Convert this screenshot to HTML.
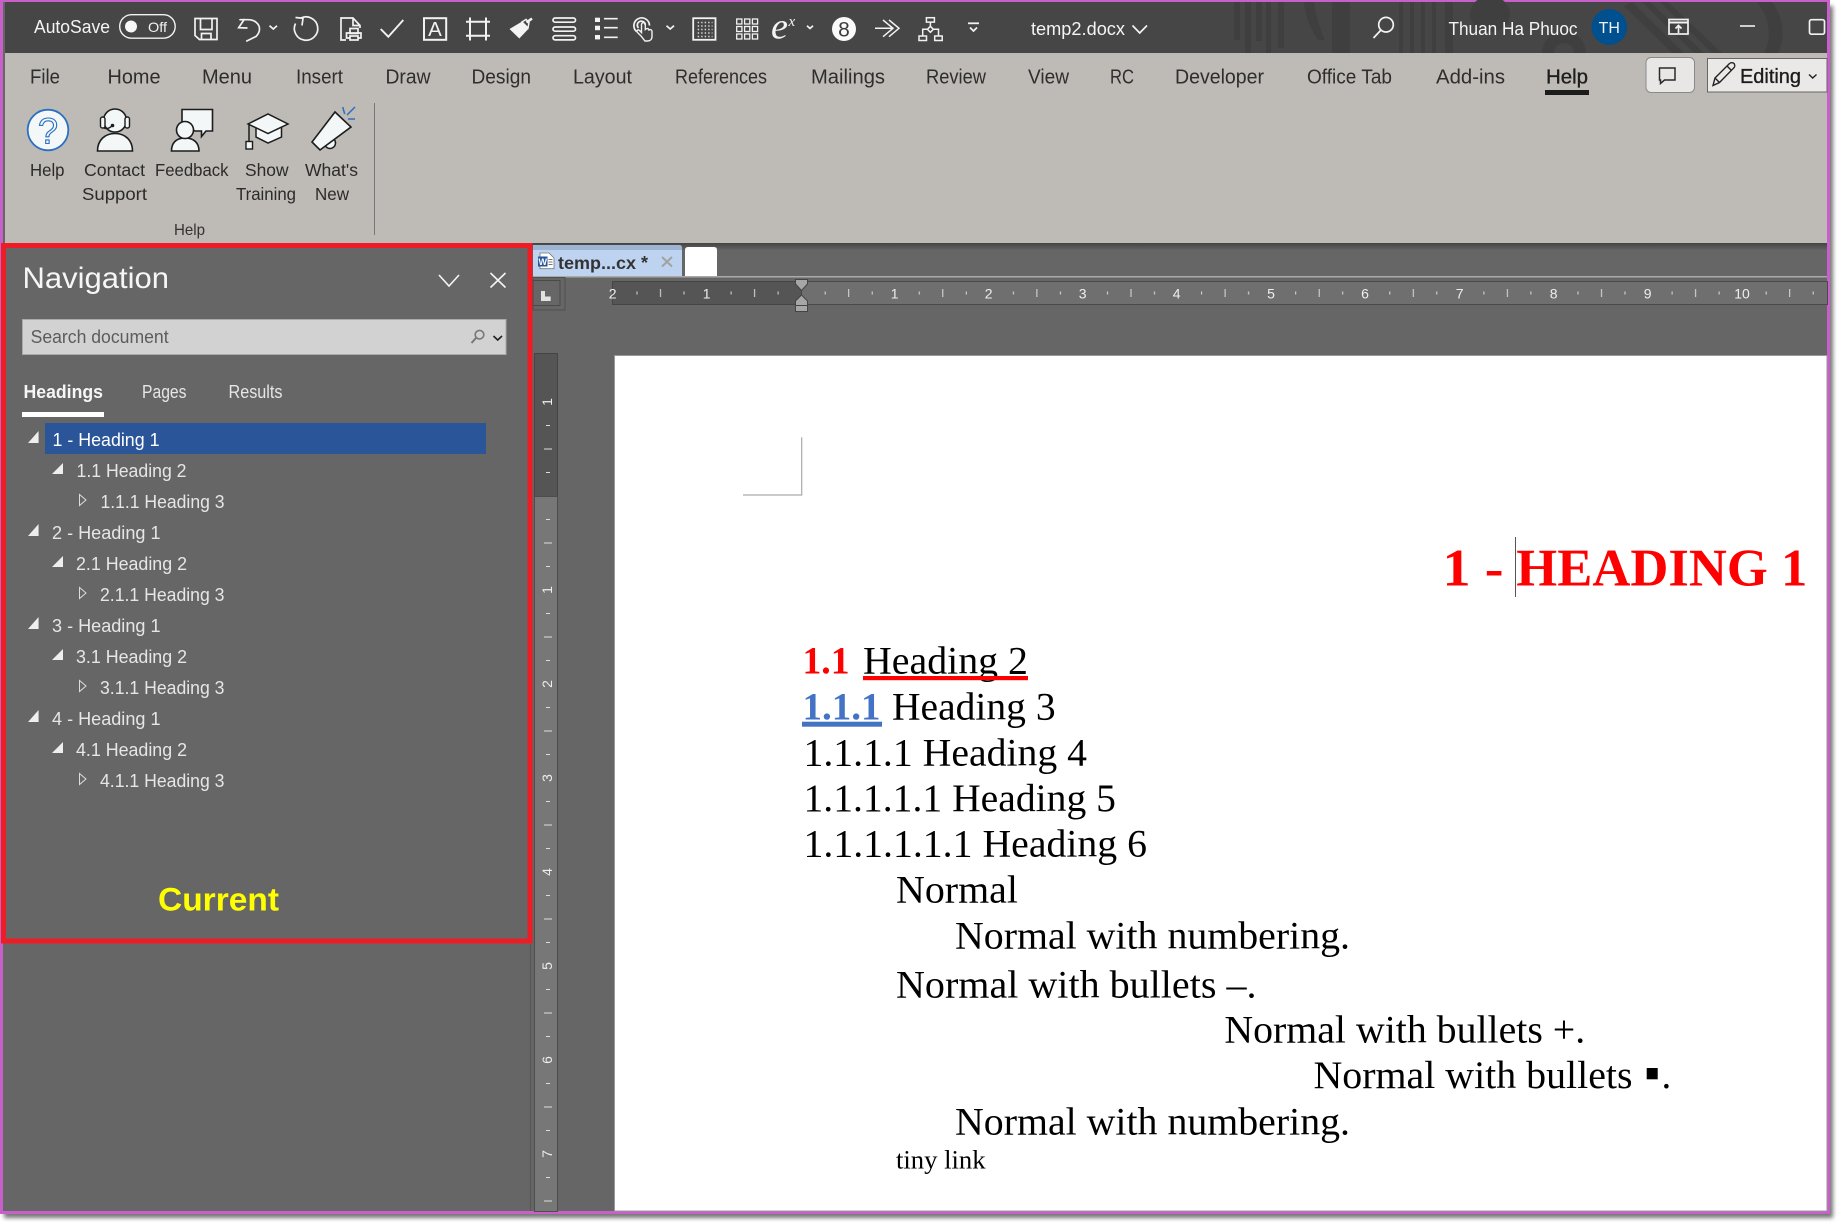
<!DOCTYPE html>
<html><head><meta charset="utf-8"><title>temp2.docx</title>
<style>
html,body{margin:0;padding:0;background:#fff;width:1838px;height:1222px;overflow:hidden}
svg{display:block}
text{font-family:"Liberation Sans",sans-serif;white-space:pre}
.tab{font-size:20px;fill:#2e2e2e}
.lab{font-size:17.5px;fill:#2b2b2b}
.nv{font-size:18px;fill:#e6e6e6}
.s{font-family:"Liberation Serif",serif;font-size:39px;fill:#000}
.rn{font-size:14px;fill:#eee;text-anchor:middle}
.w{fill:none;stroke:#f2f2f2;stroke-width:1.7}
.k{fill:#f3f7f7;stroke:#1c1c1c;stroke-width:1.7}
</style></head><body>
<svg width="1838" height="1222" viewBox="0 0 1838 1222" xmlns="http://www.w3.org/2000/svg">
<defs>
<filter id="b" x="-5%" y="-5%" width="110%" height="110%"><feGaussianBlur stdDeviation="2"/></filter>
<linearGradient id="sh" x1="0" y1="0" x2="0" y2="1"><stop offset="0" stop-color="#444"/><stop offset="1" stop-color="#666"/></linearGradient>
<pattern id="ht" patternUnits="userSpaceOnUse" x="801.7" y="281" width="94.1" height="23">
<rect x="23" y="10.5" width="1" height="3" fill="#ddd"/><rect x="46.5" y="8" width="1" height="8" fill="#ddd"/><rect x="70" y="10.5" width="1" height="3" fill="#ddd"/>
</pattern>
<pattern id="vt" patternUnits="userSpaceOnUse" x="534" y="496" width="24" height="94">
<rect x="12" y="23" width="4" height="1" fill="#ddd"/><rect x="10" y="46.5" width="8" height="1" fill="#ddd"/><rect x="12" y="70" width="4" height="1" fill="#ddd"/>
</pattern>
<g id="tris">
<path d="M28 443H38.6V431Z" fill="#eee"/>
<path d="M52 474H63V463Z" fill="#eee"/>
<path d="M79.5 494.5L86 500L79.5 505.5Z" fill="none" stroke="#ddd" stroke-width="1"/>
</g>
</defs>

<!-- outer shadow + frame -->
<rect x="4" y="6" width="1829" height="1212" fill="#777" filter="url(#b)"/>
<rect x="0" y="0" width="1830" height="1214" fill="#c95fc9"/>
<rect x="3" y="2" width="1824" height="1209" fill="#666"/>

<!-- title bar -->
<rect x="5" y="2" width="1822" height="51" fill="#464646"/>
<g fill="#3f3f3f">
<rect x="1234" y="2" width="6" height="38"/><rect x="1245" y="2" width="6" height="51"/><rect x="1256" y="2" width="6" height="39"/><rect x="1266" y="2" width="5" height="51"/><rect x="1278" y="2" width="6" height="46"/>
<path d="M1304 2H1314C1316 18 1320 28 1325 40L1318 40C1310 28 1305 16 1304 2Z"/>
<rect x="1332" y="2" width="18" height="51"/>
<rect x="1399" y="2" width="4" height="51"/><rect x="1410" y="2" width="4" height="51"/><rect x="1421" y="2" width="4" height="51"/><rect x="1432" y="2" width="4" height="51"/><rect x="1445" y="2" width="8" height="51"/>
<ellipse cx="1490" cy="14" rx="20" ry="18"/>
<path d="M1542 53A22 22 0 0 1 1586 53H1574A10 10 0 0 0 1554 53Z"/>
<path d="M1632 2L1684 53H1672L1624 6Z"/><path d="M1650 2L1704 53H1694L1642 2Z"/><path d="M1668 2L1722 53H1712L1660 2Z"/>
<path d="M1757 2H1772C1785 20 1785 38 1778 53H1764C1772 38 1770 18 1757 2Z"/>
</g>
<text x="34" y="33" font-size="18.5" fill="#f4f4f4" textLength="76" lengthAdjust="spacingAndGlyphs">AutoSave</text>
<rect x="119.7" y="14.7" width="55.5" height="23.5" rx="11.7" fill="none" stroke="#f2f2f2" stroke-width="1.4"/>
<circle cx="131" cy="26.5" r="6" fill="#f8f8f8"/>
<text x="148" y="32" font-size="14" fill="#f2f2f2" textLength="19" lengthAdjust="spacingAndGlyphs">Off</text>

<g class="w">
<!-- save -->
<path d="M195 18.5H217V39.5H199.5L195 35.5Z"/><path d="M200.5 18.5V29.5H212V18.5"/><path d="M201.5 39.5V33.5H211V39.5"/>
<!-- undo -->
<path d="M244.5 19L238.7 27.7L247.5 28"/><path d="M240 19.7H248C255 19.7 259.5 24 259.5 29C259.5 32 258 34.5 256 36.5L246.8 41" stroke-linecap="round"/>
<path d="M269.5 25.7L273.3 29L277 25.7"/>
<!-- redo -->
<path d="M301 18A11.7 11.7 0 1 1 295.5 23.5"/><path d="M295.5 17.5L303 18.3L302 25.5"/>
<!-- print doc -->
<path d="M346 40H341V18H353L360 25.5V28"/><path d="M353 18V25.5H360"/><rect x="350" y="28.5" width="8" height="5"/><path d="M350 38H346.5V33H361V38H357.5"/><rect x="350" y="36" width="8" height="4"/>
<!-- check -->
<path d="M380.7 29L388.3 36.7L403.3 20" stroke-width="1.9"/>
<!-- A box -->
<rect x="424" y="18.2" width="22.2" height="21.6" stroke-width="2"/>
<!-- hash -->
<path d="M470 17.5V40.5M486 17.5V40.5M466 21.7H490M466 35.7H490" stroke-width="2"/>
<!-- stack -->
<rect x="553" y="18" width="22.5" height="4.2" rx="2.1"/><rect x="553" y="27" width="22.5" height="4.2" rx="2.1"/><rect x="553" y="35.7" width="22.5" height="4.2" rx="2.1"/>
<!-- bullets lines -->
<path d="M604 18.7H617.7M604 27.7H617.7M604 37.3H617.7"/>
<!-- touch -->
<path d="M636.5 31.5A7.8 7.8 0 1 1 649.5 25.5"/><path d="M638.5 28A4 4 0 1 1 645.3 25"/><path d="M641 36L637.5 32.5C636 31 638 29 639.5 30.5L641.5 32.5V24.5C641.5 22 645.3 22 645.3 24.5V29.5C647 28 648.7 28.5 649 30C650.5 29 652 30 652 31.5V36.5C652 39.5 650 41 647.5 41H645Z" stroke-width="1.4"/>
<path d="M666.5 25.7L670.2 29L674 25.7"/>
<!-- grid box -->
<rect x="693.2" y="18.2" width="22.3" height="21.6" stroke-width="1.8"/>
<!-- 3x3 -->
<g stroke-width="1.3"><rect x="736.7" y="19" width="5.2" height="5"/><rect x="744.6" y="19" width="5.2" height="5"/><rect x="752.4" y="19" width="5.2" height="5"/><rect x="736.7" y="26.5" width="5.2" height="5"/><rect x="744.6" y="26.5" width="5.2" height="5"/><rect x="752.4" y="26.5" width="5.2" height="5"/><rect x="736.7" y="34" width="5.2" height="5"/><rect x="744.6" y="34" width="5.2" height="5"/><rect x="752.4" y="34" width="5.2" height="5"/></g>
<path d="M810 25.7L813 28.5L816 25.7" transform="translate(-3,0)"/>
<!-- double arrow -->
<path d="M875 28.3H893M883 20L893 28.3L883 36.7M889 20L899 28.3L889 36.7" stroke-width="1.5"/>
<!-- org -->
<g stroke-width="1.5"><rect x="926.4" y="17.7" width="8" height="4.4"/><rect x="919" y="36" width="7.5" height="4.5"/><rect x="934.7" y="36" width="7.5" height="4.5"/><path d="M930.4 22V26.3M930.4 26.3L933.4 29.3L930.4 32.3L927.4 29.3ZM927.4 29.3H922.7V36M933.4 29.3H938.5V36"/></g>
<!-- qat dropdown -->
<path d="M968 23.3H979" stroke-width="1.8"/><path d="M970 27.5L973.5 31L977 27.5"/>
<!-- title chevron -->
<path d="M1132.5 25.5L1139.7 33L1147 25.5"/>
<!-- search -->
<circle cx="1386" cy="24.7" r="7.3"/><path d="M1381 30L1373.5 38"/>
<!-- ribbon display -->
<rect x="1669" y="19.5" width="19" height="14.5"/><path d="M1669 22.5H1688" stroke-width="2"/><path d="M1678.5 33V26M1675.5 28.5L1678.5 25.5L1681.5 28.5"/>
<!-- min/max -->
<path d="M1740 26H1755" stroke-width="1.6"/>
<rect x="1809.5" y="19.7" width="15" height="14.5" rx="2"/>
</g>
<text x="435" y="36" font-size="20.5" fill="#f2f2f2" text-anchor="middle">A</text>
<!-- brush -->
<path d="M509.5 29L521.7 21.7L528.3 29L519.3 38.5Z" fill="#f4f4f4"/>
<path d="M522 22L526 19.5L529 22.5L528 28Z" fill="none" stroke="#f4f4f4" stroke-width="1.5"/>
<path d="M526.5 22.5L532 18.5" stroke="#f4f4f4" stroke-width="2.6"/>
<!-- bullets squares -->
<g fill="#f4f4f4"><rect x="595" y="17.7" width="5" height="4.3"/><rect x="595" y="25.7" width="5" height="4.5"/><rect x="595" y="35" width="5" height="4.4"/></g>
<!-- grid dots -->
<path d="M697.7 22.5H712.5M697.7 26H712.5M697.7 29.5H712.5M697.7 33H712.5M697.7 36.5H712.5" fill="none" stroke="#dcdcdc" stroke-width="1.4" stroke-dasharray="1.4 2.1"/>
<text x="771" y="38.5" font-size="37" fill="#f4f4f4" style="font-family:'Liberation Serif',serif;font-style:italic" textLength="17" lengthAdjust="spacingAndGlyphs">e</text>
<text x="788.5" y="26" font-size="15" fill="#f4f4f4" style="font-family:'Liberation Serif',serif;font-style:italic">x</text>
<circle cx="844" cy="29" r="12" fill="#fafafa"/>
<text x="844" y="36.5" font-size="21" fill="#3c3c3c" text-anchor="middle">8</text>
<text x="1031" y="35" font-size="18.5" fill="#f4f4f4" textLength="94" lengthAdjust="spacingAndGlyphs">temp2.docx</text>
<text x="1448.5" y="35" font-size="18.5" fill="#f4f4f4" textLength="129" lengthAdjust="spacingAndGlyphs">Thuan Ha Phuoc</text>
<ellipse cx="1609.3" cy="27" rx="17.8" ry="18" fill="#00508f"/>
<text x="1609.3" y="33" font-size="16" fill="#eaf1f7" text-anchor="middle">TH</text>

<!-- ribbon -->
<rect x="5" y="53" width="1822" height="190" fill="#bebab6"/>
<text class="tab" x="30" y="83.6" textLength="30" lengthAdjust="spacingAndGlyphs">File</text>
<text class="tab" x="107.5" y="83.6" textLength="53" lengthAdjust="spacingAndGlyphs">Home</text>
<text class="tab" x="202" y="83.6" textLength="50" lengthAdjust="spacingAndGlyphs">Menu</text>
<text class="tab" x="296" y="83.6" textLength="47" lengthAdjust="spacingAndGlyphs">Insert</text>
<text class="tab" x="385.5" y="83.6" textLength="45" lengthAdjust="spacingAndGlyphs">Draw</text>
<text class="tab" x="471.5" y="83.6" textLength="59.5" lengthAdjust="spacingAndGlyphs">Design</text>
<text class="tab" x="573" y="83.6" textLength="59" lengthAdjust="spacingAndGlyphs">Layout</text>
<text class="tab" x="675" y="83.6" textLength="92" lengthAdjust="spacingAndGlyphs">References</text>
<text class="tab" x="811" y="83.6" textLength="74" lengthAdjust="spacingAndGlyphs">Mailings</text>
<text class="tab" x="926" y="83.6" textLength="60" lengthAdjust="spacingAndGlyphs">Review</text>
<text class="tab" x="1028" y="83.6" textLength="41" lengthAdjust="spacingAndGlyphs">View</text>
<text class="tab" x="1110" y="83.6" textLength="24" lengthAdjust="spacingAndGlyphs">RC</text>
<text class="tab" x="1175" y="83.6" textLength="89" lengthAdjust="spacingAndGlyphs">Developer</text>
<text class="tab" x="1307" y="83.6" textLength="85" lengthAdjust="spacingAndGlyphs">Office Tab</text>
<text class="tab" x="1436" y="83.6" textLength="69" lengthAdjust="spacingAndGlyphs">Add-ins</text>
<text class="tab" x="1546" y="83.6" textLength="42" lengthAdjust="spacingAndGlyphs" style="fill:#1e1e1e;stroke:#1e1e1e;stroke-width:.35">Help</text>
<rect x="1545" y="90" width="44" height="5" fill="#1c1c1c"/>

<rect x="1646" y="57.5" width="48.5" height="35" rx="5" fill="#e9e7e5" stroke="#8a8a8a"/>
<path d="M1659.5 68H1675V80H1664.5L1660.5 83.5V80H1659.5Z" fill="none" stroke="#2a2a2a" stroke-width="1.5"/>
<rect x="1707.5" y="58.5" width="119.5" height="33.5" fill="#ebe9e7" stroke="#666"/>
<path d="M1713 85.5L1715 78L1729.5 63.5C1731 62.3 1733 62.5 1734 63.5C1735 64.7 1735 66.5 1734 67.7L1719.5 82.5ZM1715 78L1719.5 82.5M1727 66L1731.5 70.5" fill="none" stroke="#222" stroke-width="1.4"/>
<text x="1740" y="83" font-size="20" fill="#1c1c1c" textLength="61" lengthAdjust="spacingAndGlyphs" style="stroke:#1c1c1c;stroke-width:.35">Editing</text>
<path d="M1809 74.5L1812.7 78L1816.5 74.5" fill="none" stroke="#222" stroke-width="1.4"/>

<!-- ribbon icons -->
<circle cx="48" cy="130" r="20.3" fill="#f3f7f7" stroke="#2a6fc0" stroke-width="1.8"/>
<text x="48" y="143.5" font-size="36" fill="#f3f7f7" stroke="#2a6fc0" stroke-width="1.1" text-anchor="middle">?</text>
<!-- contact -->
<path class="k" d="M97.5 151C97.5 140 105 133.5 115 133.5C125 133.5 132.5 140 132.5 151Z" style="stroke-width:1.6"/>
<circle class="k" cx="115" cy="120.5" r="11.5" style="stroke-width:1.6"/>
<rect class="k" x="100.5" y="117" width="4.5" height="11" rx="2" style="stroke-width:1.4"/><rect class="k" x="125" y="117" width="4.5" height="11" rx="2" style="stroke-width:1.4"/>
<path d="M104 128C106 129 109 128.5 112 126" fill="none" stroke="#1c1c1c" stroke-width="1.4"/><circle cx="112.5" cy="125.5" r="1.8" fill="#1c1c1c"/>
<!-- feedback -->
<path class="k" d="M182 109.5H212.5V131H206L201.5 136.5V131H195L182 125Z" style="stroke-width:1.6"/>
<path class="k" d="M171.5 151C171.5 143 176 138 185 138C194 138 199 143 199 151Z" style="stroke-width:1.6"/>
<circle class="k" cx="185" cy="130" r="8.5" style="stroke-width:1.6"/>
<!-- training -->
<path class="k" d="M256 127V137L268 143L281.5 137V127Z" style="stroke-width:1.5"/>
<path class="k" d="M248 124L268 114L288 124L268 133.5Z" style="stroke-width:1.5"/>
<path d="M249 124V141" stroke="#1c1c1c" stroke-width="1.5"/><rect class="k" x="246" y="141.5" width="6.5" height="7.5" style="stroke-width:1.4"/>
<!-- what's new -->
<circle class="k" cx="330" cy="143" r="5.5" style="stroke-width:1.5"/>
<path class="k" d="M335 112L351 127L320 150L312 142Z" style="stroke-width:1.6"/>
<path d="M342.7 107L344.7 114M355 107L347 115M348 119H355" stroke="#2a6fc0" stroke-width="1.5" fill="none"/>
<!-- labels -->
<text class="lab" x="30" y="176" textLength="34.5" lengthAdjust="spacingAndGlyphs">Help</text>
<text class="lab" x="84" y="176" textLength="61" lengthAdjust="spacingAndGlyphs">Contact</text>
<text class="lab" x="82" y="200" textLength="65" lengthAdjust="spacingAndGlyphs">Support</text>
<text class="lab" x="155" y="176" textLength="73.5" lengthAdjust="spacingAndGlyphs">Feedback</text>
<text class="lab" x="245" y="176" textLength="43.5" lengthAdjust="spacingAndGlyphs">Show</text>
<text class="lab" x="236" y="200" textLength="60" lengthAdjust="spacingAndGlyphs">Training</text>
<text class="lab" x="305" y="176" textLength="53" lengthAdjust="spacingAndGlyphs">What's</text>
<text class="lab" x="315" y="200" textLength="34" lengthAdjust="spacingAndGlyphs">New</text>
<text x="174" y="235" font-size="16" fill="#333" textLength="31" lengthAdjust="spacingAndGlyphs">Help</text>
<rect x="374" y="103" width="1" height="132" fill="#777"/>

<!-- band below ribbon -->
<rect x="5" y="243" width="1822" height="8" fill="url(#sh)"/>

<!-- lower left panel -->
<rect x="5" y="944" width="525" height="267" fill="#666"/>
<rect x="530" y="944" width="1" height="267" fill="#555"/>

<!-- doc chrome -->
<rect x="531" y="250" width="1296" height="961" fill="#666"/>
<rect x="533" y="276" width="1294" height="1.5" fill="#aaa"/>
<path d="M533 276V245H679Q682 245 682 248V276Z" fill="#bdd3f0"/>
<path d="M533 245H679Q682 245 682 248V250H533Z" fill="#9fb4d2"/>
<path d="M685 276V250Q685 247 688 247H714Q717 247 717 250V276Z" fill="#fff"/>
<path d="M540 253H549L554 258V268.7H540Z" fill="#fff" stroke="#777" stroke-width=".8"/>
<rect x="538" y="256.5" width="9.5" height="10" fill="#2b579a"/>
<text x="542.7" y="265" font-size="9" fill="#fff" text-anchor="middle" style="font-weight:bold">W</text>
<path d="M548.5 259.5H552.5M548.5 262H552.5M548.5 264.5H552.5" stroke="#777"/>
<text x="558" y="268.8" font-size="17.5" fill="#333" textLength="78" lengthAdjust="spacingAndGlyphs" style="font-weight:bold">temp...cx</text>
<text x="641" y="268.8" font-size="18" fill="#333" style="font-weight:bold">*</text>
<path d="M662 257L672 266.5M672 257L662 266.5" stroke="#a2a2a2" stroke-width="2" fill="none"/>

<!-- tab stop corner -->
<rect x="533" y="277.5" width="32" height="32.5" fill="none" stroke="#505050"/>
<rect x="533" y="280.5" width="27" height="25" fill="none" stroke="#4a4a4a"/>
<path d="M541 291H545V296.5H550.7V301H541Z" fill="#e2e2e2"/>

<!-- horizontal ruler -->
<rect x="612.5" y="281.5" width="189" height="23" fill="#555" stroke="#454545"/>
<rect x="801.5" y="281.5" width="1026" height="23" fill="#6f6f6f" stroke="#4a4a4a"/>
<rect x="612" y="281" width="1215" height="23" fill="url(#ht)"/>
<text class="rn" x="612.7" y="298.5">2</text>
<rect x="700" y="284" width="13" height="17" fill="#555"/>
<text class="rn" x="706.7" y="298.5">1</text>
<rect x="888" y="284" width="13" height="17" fill="#6f6f6f"/><text class="rn" x="894.7" y="298.5">1</text>
<rect x="982" y="284" width="13" height="17" fill="#6f6f6f"/><text class="rn" x="988.7" y="298.5">2</text>
<rect x="1076" y="284" width="13" height="17" fill="#6f6f6f"/><text class="rn" x="1082.7" y="298.5">3</text>
<rect x="1170" y="284" width="13" height="17" fill="#6f6f6f"/><text class="rn" x="1176.7" y="298.5">4</text>
<rect x="1264" y="284" width="13" height="17" fill="#6f6f6f"/><text class="rn" x="1271" y="298.5">5</text>
<rect x="1358" y="284" width="13" height="17" fill="#6f6f6f"/><text class="rn" x="1365" y="298.5">6</text>
<rect x="1453" y="284" width="13" height="17" fill="#6f6f6f"/><text class="rn" x="1459.7" y="298.5">7</text>
<rect x="1547" y="284" width="13" height="17" fill="#6f6f6f"/><text class="rn" x="1553.7" y="298.5">8</text>
<rect x="1641" y="284" width="13" height="17" fill="#6f6f6f"/><text class="rn" x="1647.7" y="298.5">9</text>
<rect x="1732" y="284" width="20" height="17" fill="#6f6f6f"/><text class="rn" x="1742" y="298.5">10</text>
<!-- indent markers -->
<path d="M795.5 279.5H807.5V284L801.5 290.5L795.5 284Z" fill="#a6a6a6" stroke="#444"/>
<path d="M801.5 295L807.5 301V305.5H795.5V301Z" fill="#a6a6a6" stroke="#444"/>
<rect x="795.5" y="305.5" width="12" height="6" fill="#a6a6a6" stroke="#444"/>

<!-- vertical ruler -->
<rect x="534.5" y="353.5" width="23" height="143" fill="#555" stroke="#454545"/>
<rect x="534.5" y="496.5" width="23" height="715" fill="#777" stroke="#4d4d4d"/>
<rect x="534" y="354" width="24" height="857" fill="url(#vt)"/>
<rect x="535" y="354" width="22" height="42" fill="#555"/>
<g>
<text class="rn" transform="translate(552,402) rotate(-90)">1</text>
<text class="rn" transform="translate(552,590) rotate(-90)">1</text>
<text class="rn" transform="translate(552,684) rotate(-90)">2</text>
<text class="rn" transform="translate(552,778) rotate(-90)">3</text>
<text class="rn" transform="translate(552,872) rotate(-90)">4</text>
<text class="rn" transform="translate(552,966) rotate(-90)">5</text>
<text class="rn" transform="translate(552,1060) rotate(-90)">6</text>
<text class="rn" transform="translate(552,1154) rotate(-90)">7</text>
</g>

<!-- page -->
<rect x="614.5" y="355.5" width="1212.5" height="855.5" fill="#fff" stroke="#999"/>
<path d="M801.7 437.3V495H743" fill="none" stroke="#aaa" stroke-width="1.2"/>
<rect x="1515" y="537" width="1" height="60" fill="#555"/>
<text x="1442.5" y="585.7" font-size="53" fill="#f00" style="font-family:'Liberation Serif',serif;font-weight:bold" textLength="61" lengthAdjust="spacingAndGlyphs">1 -</text>
<text x="1516.3" y="585.7" font-size="53" fill="#f00" style="font-family:'Liberation Serif',serif;font-weight:bold" textLength="291" lengthAdjust="spacingAndGlyphs">HEADING 1</text>

<text class="s" x="802.5" y="673.3" textLength="47" lengthAdjust="spacingAndGlyphs" style="fill:#f00;font-weight:bold">1.1</text>
<text class="s" x="863" y="673.3" textLength="165" lengthAdjust="spacingAndGlyphs">Heading 2</text>
<rect x="863" y="676" width="165" height="4.2" fill="#f00"/>
<text class="s" x="802.5" y="719.3" textLength="78" lengthAdjust="spacingAndGlyphs" style="fill:#4472c4;font-weight:bold">1.1.1</text>
<rect x="802" y="721.7" width="80" height="5" fill="#4472c4"/>
<text class="s" x="892" y="719.3" textLength="163.6" lengthAdjust="spacingAndGlyphs">Heading 3</text>
<text class="s" x="803.5" y="765.3" textLength="283.5" lengthAdjust="spacingAndGlyphs">1.1.1.1 Heading 4</text>
<text class="s" x="803.5" y="811" textLength="312.5" lengthAdjust="spacingAndGlyphs">1.1.1.1.1 Heading 5</text>
<text class="s" x="803.5" y="856.7" textLength="343.5" lengthAdjust="spacingAndGlyphs">1.1.1.1.1.1 Heading 6</text>
<text class="s" x="896" y="902.3" textLength="122" lengthAdjust="spacingAndGlyphs">Normal</text>
<text class="s" x="955" y="948.3" textLength="395" lengthAdjust="spacingAndGlyphs">Normal with numbering.</text>
<text class="s" x="896" y="997.3" textLength="360.5" lengthAdjust="spacingAndGlyphs">Normal with bullets –.</text>
<text class="s" x="1224.4" y="1042.3" textLength="360.8" lengthAdjust="spacingAndGlyphs">Normal with bullets +.</text>
<text class="s" x="1313.5" y="1088" textLength="319" lengthAdjust="spacingAndGlyphs">Normal with bullets</text>
<rect x="1646.7" y="1068" width="11" height="11.3" fill="#000"/>
<text class="s" x="1661.5" y="1088">.</text>
<text class="s" x="955" y="1134.3" textLength="395" lengthAdjust="spacingAndGlyphs">Normal with numbering.</text>
<text class="s" x="896" y="1168.3" textLength="89.6" lengthAdjust="spacingAndGlyphs" style="font-size:26px">tiny link</text>

<!-- navigation pane -->
<rect x="3.5" y="245.5" width="526.5" height="695.5" fill="#666" stroke="#ee1c25" stroke-width="5"/>
<text x="22.5" y="288" font-size="30" fill="#f6f6f6" textLength="146.5" lengthAdjust="spacingAndGlyphs">Navigation</text>
<path d="M439 275L449 286L459 275" fill="none" stroke="#f4f4f4" stroke-width="1.6"/>
<path d="M490.5 273L505.5 287.5M505.5 273L490.5 287.5" fill="none" stroke="#f4f4f4" stroke-width="1.6"/>
<rect x="22.5" y="319.5" width="483.5" height="35" fill="#d2d2d2" stroke="#aaa"/>
<text x="30.6" y="343" font-size="18" fill="#5c5c5c" textLength="138" lengthAdjust="spacingAndGlyphs">Search document</text>
<circle cx="479.5" cy="334.7" r="4.3" fill="none" stroke="#777" stroke-width="1.6"/>
<path d="M476 338L471.5 343" stroke="#777" stroke-width="2" fill="none"/>
<path d="M493.5 336L497.7 340L502 336" fill="none" stroke="#222" stroke-width="1.6"/>
<text x="23.5" y="398.2" font-size="18" fill="#f6f6f6" textLength="79.5" lengthAdjust="spacingAndGlyphs" style="font-weight:bold">Headings</text>
<text x="142" y="398.2" font-size="18" fill="#e6e6e6" textLength="44.5" lengthAdjust="spacingAndGlyphs">Pages</text>
<text x="228.5" y="398.2" font-size="18" fill="#e6e6e6" textLength="54" lengthAdjust="spacingAndGlyphs">Results</text>
<rect x="22" y="412" width="82" height="5" fill="#fff"/>
<rect x="45" y="423" width="441" height="31" fill="#2a5699"/>
<use href="#tris"/><use href="#tris" y="93"/><use href="#tris" y="186"/><use href="#tris" y="279"/>
<text class="nv" x="52.5" y="445.8" textLength="107" lengthAdjust="spacingAndGlyphs" style="fill:#fff">1 - Heading 1</text>
<text class="nv" x="76.5" y="476.8" textLength="110" lengthAdjust="spacingAndGlyphs">1.1 Heading 2</text>
<text class="nv" x="100.5" y="507.8" textLength="124" lengthAdjust="spacingAndGlyphs">1.1.1 Heading 3</text>
<text class="nv" x="52" y="538.8" textLength="108.5" lengthAdjust="spacingAndGlyphs">2 - Heading 1</text>
<text class="nv" x="76" y="569.8" textLength="111" lengthAdjust="spacingAndGlyphs">2.1 Heading 2</text>
<text class="nv" x="100" y="600.8" textLength="124.5" lengthAdjust="spacingAndGlyphs">2.1.1 Heading 3</text>
<text class="nv" x="52" y="631.8" textLength="108.5" lengthAdjust="spacingAndGlyphs">3 - Heading 1</text>
<text class="nv" x="76" y="662.8" textLength="111" lengthAdjust="spacingAndGlyphs">3.1 Heading 2</text>
<text class="nv" x="100" y="693.8" textLength="124.5" lengthAdjust="spacingAndGlyphs">3.1.1 Heading 3</text>
<text class="nv" x="52" y="724.8" textLength="108.5" lengthAdjust="spacingAndGlyphs">4 - Heading 1</text>
<text class="nv" x="76" y="755.8" textLength="111" lengthAdjust="spacingAndGlyphs">4.1 Heading 2</text>
<text class="nv" x="100" y="786.8" textLength="124.5" lengthAdjust="spacingAndGlyphs">4.1.1 Heading 3</text>
<text x="158" y="910.7" font-size="32" fill="#ffff00" textLength="121" lengthAdjust="spacingAndGlyphs" style="font-weight:bold">Current</text>
</svg>
</body></html>
